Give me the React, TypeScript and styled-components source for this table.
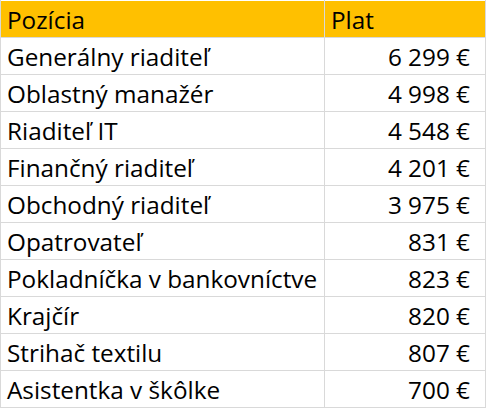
import React from "react";
import styled, { createGlobalStyle } from "styled-components";

const GlobalStyle = createGlobalStyle`
  html, body { margin: 0; padding: 0; background: #ffffff; }
  body { font-family: "Open Sans", Lato, sans-serif; color: #000; }
`;

const LINE = "#d9d9d9";

const Sheet = styled.div`
  width: 486px;
  box-sizing: border-box;
  border-left: 1px solid ${LINE};
  border-right: 1px solid ${LINE};
  display: flex;
  flex-direction: column;
`;

const Row = styled.div<{ $header?: boolean; $edge?: boolean }>`
  display: grid;
  grid-template-columns: 323px 161px;
  height: ${(p) => (p.$edge ? "1px" : "36px")};
  background: ${(p) => (p.$header ? "#FFC000" : "#ffffff")};
  border-bottom: ${(p) => (p.$edge ? "none" : `1px solid ${LINE}`)};
`;

const Cell = styled.div<{ $right?: boolean; $header?: boolean }>`
  display: flex;
  align-items: flex-end;
  justify-content: ${(p) => (p.$right ? "flex-end" : "flex-start")};
  box-sizing: border-box;
  padding: 0 ${(p) => (p.$right ? "15px" : "0")} 2px 6px;
  font-size: 24.3px;
  line-height: 30px;
  white-space: nowrap;
  overflow: hidden;
  & + & {
    border-left: 1px solid ${(p) => (p.$header ? "transparent" : LINE)};
  }
`;

const rows: [string, string][] = [
  ["Generálny riaditeľ", "6 299 €"],
  ["Oblastný manažér", "4 998 €"],
  ["Riaditeľ IT", "4 548 €"],
  ["Finančný riaditeľ", "4 201 €"],
  ["Obchodný riaditeľ", "3 975 €"],
  ["Opatrovateľ", "831 €"],
  ["Pokladníčka v bankovníctve", "823 €"],
  ["Krajčír", "820 €"],
  ["Strihač textilu", "807 €"],
  ["Asistentka v škôlke", "700 €"],
];

export default function App() {
  return (
    <>
      <GlobalStyle />
      <Sheet>
        <Row $edge>
          <Cell />
          <Cell />
        </Row>
        <Row $header>
          <Cell $header>Pozícia</Cell>
          <Cell $header>Plat</Cell>
        </Row>
        {rows.map(([name, pay]) => (
          <Row key={name}>
            <Cell>{name}</Cell>
            <Cell $right>{pay}</Cell>
          </Row>
        ))}
      </Sheet>
    </>
  );
}
